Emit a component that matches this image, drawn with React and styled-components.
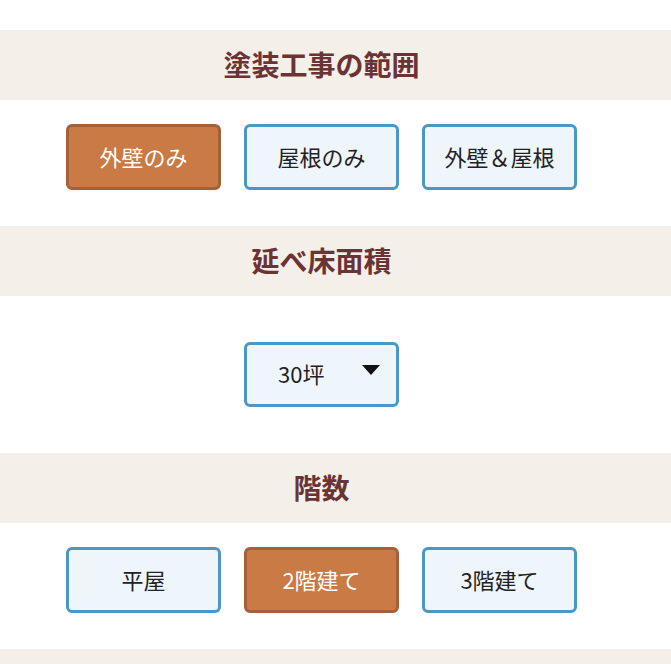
import React, { useState } from "react";
import styled, { createGlobalStyle } from "styled-components";

const GlobalStyle = createGlobalStyle`
  body {
    margin: 0;
    background: #ffffff;
    font-family: "Noto Sans CJK JP", "Noto Sans", sans-serif;
  }
`;

const scopes = ["外壁のみ", "屋根のみ", "外壁＆屋根"];
const floors = ["平屋", "2階建て", "3階建て"];
const areas = ["20坪", "30坪", "40坪", "50坪"];

export default function App() {
  const [scope, setScope] = useState(0);
  const [floor, setFloor] = useState(1);
  const [area, setArea] = useState("30坪");

  return (
    <>
      <GlobalStyle />
      <PAGE>
        <HEADING>塗装工事の範囲</HEADING>
        <CHOICES>
          {scopes.map((s, i) => (
            <OPTION key={s} active={i === scope} onClick={() => setScope(i)}>
              {s}
            </OPTION>
          ))}
        </CHOICES>

        <HEADING>延べ床面積</HEADING>
        <SELECTAREA>
          <SELECTWRAP>
            <SELECT value={area} onChange={(e) => setArea(e.target.value)}>
              {areas.map((a) => (
                <option key={a} value={a}>
                  {a}
                </option>
              ))}
            </SELECT>
            <ARROW viewBox="0 0 18 10">
              <path d="M0 0 L18 0 L9 10 Z" fill="#111" />
            </ARROW>
          </SELECTWRAP>
        </SELECTAREA>

        <HEADING>階数</HEADING>
        <CHOICES>
          {floors.map((f, i) => (
            <OPTION key={f} active={i === floor} onClick={() => setFloor(i)}>
              {f}
            </OPTION>
          ))}
        </CHOICES>

        <HEADING as="div" />
      </PAGE>
    </>
  );
}

// content is centred in the area left of a 28px gutter
const PAGE = styled.div`
  padding-top: 30px;
  width: 671px;
  height: 664px;
  overflow: hidden;
`;

const HEADING = styled.h2`
  margin: 0;
  height: 70px;
  padding: 0 28px 3px 0;
  box-sizing: border-box;
  display: flex;
  align-items: center;
  justify-content: center;
  background: #f4efe9;
  color: #6b3434;
  font-size: 28px;
  font-weight: 700;
`;

const CHOICES = styled.div`
  display: flex;
  justify-content: center;
  gap: 23px;
  padding: 24px 28px 36px 0;
`;

const OPTION = styled.button.withConfig({
  shouldForwardProp: (p) => p !== "active",
})`
  width: 155px;
  height: 66px;
  box-sizing: border-box;
  padding: 0 0 3px;
  border-radius: 6px;
  border: 3px solid ${(p) => (p.active ? "#a5603a" : "#4b97c5")};
  background: ${(p) => (p.active ? "#c97a45" : "#eef5fb")};
  color: ${(p) => (p.active ? "#ffffff" : "#222222")};
  font-family: "Noto Sans CJK JP", "Noto Sans", sans-serif;
  font-size: 22px;
  cursor: pointer;
`;

const SELECTAREA = styled.div`
  display: flex;
  justify-content: center;
  padding: 46px 28px 46px 0;
`;

const SELECTWRAP = styled.div`
  position: relative;
  width: 155px;
  height: 65px;
`;

const SELECT = styled.select`
  appearance: none;
  width: 100%;
  height: 100%;
  box-sizing: border-box;
  border: 3px solid #4b97c5;
  border-radius: 6px;
  background: #eef5fb;
  color: #222222;
  padding: 0 0 3px 31px;
  font-family: "Noto Sans CJK JP", "Noto Sans", sans-serif;
  font-size: 22px;
`;

const ARROW = styled.svg`
  position: absolute;
  right: 19px;
  top: 23px;
  width: 18px;
  height: 10px;
  pointer-events: none;
`;
